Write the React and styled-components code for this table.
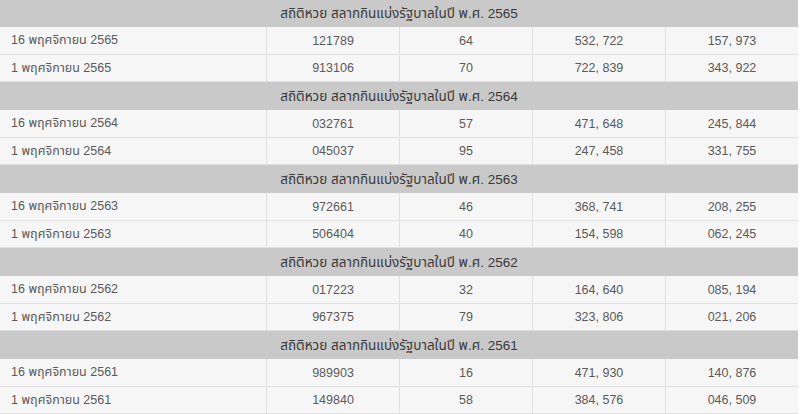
import React from "react";
import styled, { createGlobalStyle } from "styled-components";

const Global = createGlobalStyle`
  html, body { margin: 0; padding: 0; background: #ffffff; }
  body { font-family: "Liberation Sans", "Noto Sans Thai", "Noto Sans", Arial, sans-serif; overflow: hidden; }
`;

const Board = styled.div`
  width: 798px;
  margin-top: -1px;
  display: flex;
  flex-direction: column;
  font-size: 12.5px;
  color: #5a5a5a;
`;

const Section = styled.section`
  display: flex;
  flex-direction: column;
  height: 83px;
`;

const SectionTitle = styled.div`
  height: 28px;
  flex: none;
  display: flex;
  align-items: center;
  justify-content: center;
  padding-top: 1px;
  box-sizing: border-box;
  background: #c9c9c9;
  font-size: 13.5px;
  color: #3a3a3a;
`;

const Row = styled.div`
  flex: 1;
  display: grid;
  grid-template-columns: 266px repeat(4, 1fr);
  background: #f7f6f7;
  border-bottom: 1px solid #e0e0e0;
  box-sizing: border-box;
`;

const Cell = styled.div`
  display: flex;
  align-items: center;
  justify-content: ${(p) => (p.$first ? "flex-start" : "center")};
  padding-left: ${(p) => (p.$first ? "11px" : "0")};
  padding-top: 1px;
  border-left: ${(p) => (p.$first ? "none" : "1px solid #e0e0e0")};
  white-space: nowrap;
`;

const data = [
  { year: "2565", rows: [
    ["16 พฤศจิกายน 2565", "121789", "64", "532, 722", "157, 973"],
    ["1 พฤศจิกายน 2565", "913106", "70", "722, 839", "343, 922"],
  ]},
  { year: "2564", rows: [
    ["16 พฤศจิกายน 2564", "032761", "57", "471, 648", "245, 844"],
    ["1 พฤศจิกายน 2564", "045037", "95", "247, 458", "331, 755"],
  ]},
  { year: "2563", rows: [
    ["16 พฤศจิกายน 2563", "972661", "46", "368, 741", "208, 255"],
    ["1 พฤศจิกายน 2563", "506404", "40", "154, 598", "062, 245"],
  ]},
  { year: "2562", rows: [
    ["16 พฤศจิกายน 2562", "017223", "32", "164, 640", "085, 194"],
    ["1 พฤศจิกายน 2562", "967375", "79", "323, 806", "021, 206"],
  ]},
  { year: "2561", rows: [
    ["16 พฤศจิกายน 2561", "989903", "16", "471, 930", "140, 876"],
    ["1 พฤศจิกายน 2561", "149840", "58", "384, 576", "046, 509"],
  ]},
];

export default function App() {
  return (
    <Board>
      <Global />
      {data.map((sec) => (
        <Section key={sec.year}>
          <SectionTitle>สถิติหวย สลากกินแบ่งรัฐบาลในปี พ.ศ. {sec.year}</SectionTitle>
          {sec.rows.map((r) => (
            <Row key={r[0]}>
              {r.map((c, i) => (
                <Cell key={i} $first={i === 0}>{c}</Cell>
              ))}
            </Row>
          ))}
        </Section>
      ))}
    </Board>
  );
}
